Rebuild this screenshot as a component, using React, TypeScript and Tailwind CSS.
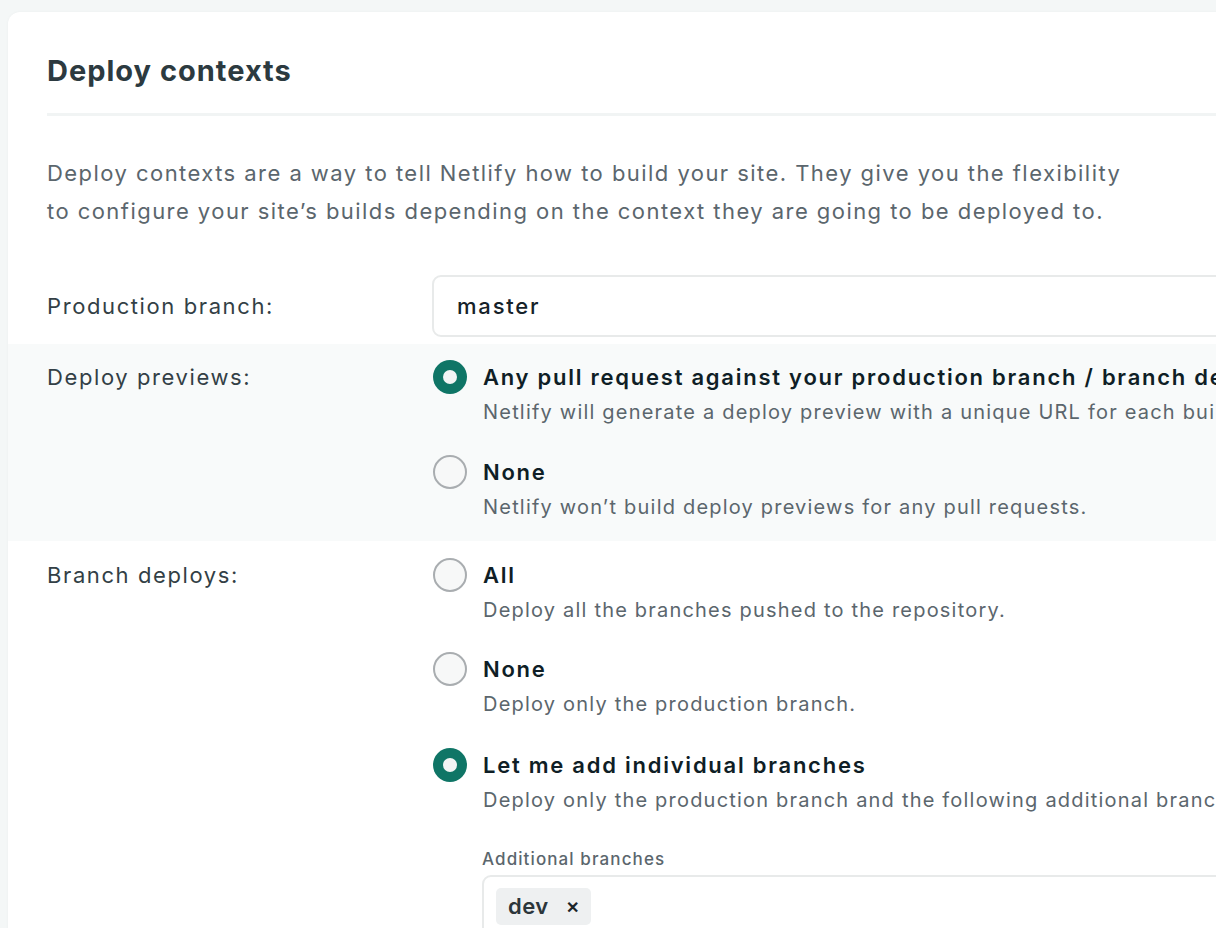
import React from "react";

function Radio({ checked }: { checked: boolean }) {
  return checked ? (
    <span className="flex h-[34px] w-[34px] shrink-0 items-center justify-center rounded-full bg-[#0f7566]">
      <span className="h-[14px] w-[14px] rounded-full bg-[#f2f4f4]" />
    </span>
  ) : (
    <span className="h-[34px] w-[34px] shrink-0 rounded-full border-2 border-[#a9adb0] bg-[#f7f8f8]" />
  );
}

function Option({
  checked,
  title,
  desc,
  className = "",
}: {
  checked: boolean;
  title: string;
  desc: string;
  className?: string;
}) {
  return (
    <div className={"flex flex-col " + className}>
      <div className="flex h-[34px] items-center gap-[16px] pl-[1px]">
        <Radio checked={checked} />
        <span className="whitespace-nowrap text-[22px] font-semibold leading-[34px] tracking-[1.75px] text-[#0f1e26]">
          {title}
        </span>
      </div>
      <div className="whitespace-nowrap pl-[51px] text-[20px] leading-[36px] tracking-[1.2px] text-[#5b666d]">
        {desc}
      </div>
    </div>
  );
}

export default function App() {
  return (
    <div
      className="h-[928px] w-[1216px] overflow-hidden bg-[#f4f7f7]"
      style={{ fontFamily: "Inter, 'Noto Sans', sans-serif" }}
    >
      <div className="ml-[8px] mt-[12px] w-[1500px] rounded-tl-[12px] bg-white pb-[40px] pt-[41px] shadow-[0_0_3px_rgba(0,0,0,0.04)]">
        <div className="px-[39px]">
          <h2 className="text-[29px] font-bold leading-[36px] tracking-[1px] text-[#2c3a40]">
            Deploy contexts
          </h2>
          <div className="mt-[24px] h-[3px] bg-[#f1f4f4]" />
          <p className="mt-[38px] w-[1200px] text-[22px] leading-[38px] tracking-[1.45px] text-[#5b666d]">
            Deploy contexts are a way to tell Netlify how to build your site. They give you the flexibility
            <br />
            to configure your site’s builds depending on the context they are going to be deployed to.
          </p>
          <div className="mt-[45px] flex items-center">
            <div className="w-[385px] text-[22px] tracking-[1.6px] text-[#333f46]">Production branch:</div>
            <div className="flex h-[62px] flex-1 items-center rounded-[9px] border-2 border-[#e8eaea] px-[23px] text-[22px] font-medium tracking-[1.8px] text-[#152229]">
              master
            </div>
          </div>
        </div>

        <div className="mt-[7px] flex bg-[#f8fafa] px-[39px] pb-[16px] pt-[16px]">
          <div className="h-[34px] w-[385px] text-[22px] leading-[34px] tracking-[1.6px] text-[#333f46]">
            Deploy previews:
          </div>
          <div className="flex flex-col">
            <Option
              checked
              title="Any pull request against your production branch / branch deploy branches"
              desc="Netlify will generate a deploy preview with a unique URL for each built pull request."
            />
            <Option
              checked={false}
              className="mt-[25px]"
              title="None"
              desc="Netlify won’t build deploy previews for any pull requests."
            />
          </div>
        </div>

        <div className="mt-[17px] flex px-[39px]">
          <div className="h-[34px] w-[385px] text-[22px] leading-[34px] tracking-[1.6px] text-[#333f46]">
            Branch deploys:
          </div>
          <div className="flex flex-1 flex-col">
            <Option
              checked={false}
              title="All"
              desc="Deploy all the branches pushed to the repository."
            />
            <Option
              checked={false}
              className="mt-[24px]"
              title="None"
              desc="Deploy only the production branch."
            />
            <Option
              checked
              className="mt-[26px]"
              title="Let me add individual branches"
              desc="Deploy only the production branch and the following additional branches:"
            />
            <div className="ml-[50px] mt-[29px] flex flex-col">
              <div className="text-[17px] font-medium leading-[24px] tracking-[1.1px] text-[#5b666d]">
                Additional branches
              </div>
              <div className="mt-[4px] flex h-[70px] items-start rounded-[9px] border-2 border-[#e8eaea] px-[12px] pt-[11px]">
                <span className="flex h-[37px] items-center gap-[17px] rounded-[5px] bg-[#eef0f1] pl-[12px] pr-[12px] text-[22px] font-semibold tracking-[0.5px] text-[#2c363b]">
                  dev
                  <span className="text-[16px] font-bold text-[#1c2529]">✕</span>
                </span>
              </div>
            </div>
          </div>
        </div>
      </div>
    </div>
  );
}
